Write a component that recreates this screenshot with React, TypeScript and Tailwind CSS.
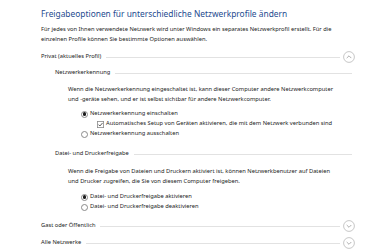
import React from "react";

function Chevron({ up }: { up?: boolean }) {
  return (
    <svg width="12" height="12" viewBox="0 0 12 12" className="shrink-0">
      <circle cx="6" cy="6" r="5.4" fill="white" stroke="#b9b9b9" strokeWidth="0.8" />
      {up ? (
        <path d="M3.7 7.1 L6 4.8 L8.3 7.1" fill="none" stroke="#9a9a9a" strokeWidth="0.8" />
      ) : (
        <path d="M3.7 5 L6 7.3 L8.3 5" fill="none" stroke="#9a9a9a" strokeWidth="0.8" />
      )}
    </svg>
  );
}

function Radio({ checked, label }: { checked?: boolean; label: string }) {
  return (
    <div className="flex items-center h-[10px] pl-[81px]">
      <span className="w-[7px] h-[7px] rounded-full border-[0.8px] border-[#8a8a8a] bg-white flex items-center justify-center shrink-0">
        {checked && <span className="w-[3.5px] h-[3.5px] rounded-full bg-[#1a1a1a]" />}
      </span>
      <span className="ml-[2px]">{label}</span>
    </div>
  );
}

function Checkbox({ label }: { label: string }) {
  return (
    <div className="flex items-center h-[10px] pl-[97px]">
      <svg width="7" height="7" viewBox="0 0 7 7" className="shrink-0">
        <rect x="0.4" y="0.4" width="6.2" height="6.2" fill="white" stroke="#8a8a8a" strokeWidth="0.8" />
        <path d="M1.5 3.6 L2.9 5 L5.6 1.9" fill="none" stroke="#333" strokeWidth="0.8" />
      </svg>
      <span className="ml-[2px]">{label}</span>
    </div>
  );
}

function GroupHeader({ label, up }: { label: string; up?: boolean }) {
  return (
    <div className="flex items-center h-[12px] pl-[41px] pr-[16px]">
      <span className="shrink-0">{label}</span>
      <div className="flex-1 h-px bg-[#e2e2e2] ml-[5px] mr-[3px]" />
      <Chevron up={up} />
    </div>
  );
}

function SubHeader({ label }: { label: string }) {
  return (
    <div className="flex items-center h-[10px] pl-[55px] pr-[19px]">
      <span className="shrink-0">{label}</span>
      <div className="flex-1 h-px bg-[#e2e2e2] ml-[5px]" />
    </div>
  );
}

export default function App() {
  return (
    <div className="w-[371px] h-[250px] bg-white overflow-hidden font-['Noto_Sans',sans-serif] text-[5.75px] leading-[9.5px] text-[#222]">
      <div className="pt-[8px] pl-[41px] text-[8.4px] leading-[12px] text-[#1e4b8f]">
        Freigabeoptionen für unterschiedliche Netzwerkprofile ändern
      </div>
      <div className="mt-[5px] pl-[41px]">
        Für jedes von Ihnen verwendete Netzwerk wird unter Windows ein separates Netzwerkprofil erstellt. Für die
        <br />
        einzelnen Profile können Sie bestimmte Optionen auswählen.
      </div>
      <div className="mt-[7px]">
        <GroupHeader label="Privat (aktuelles Profil)" up />
      </div>
      <div className="mt-[5px]">
        <SubHeader label="Netzwerkerkennung" />
      </div>
      <div className="mt-[7px] pl-[68px]">
        Wenn die Netzwerkerkennung eingeschaltet ist, kann dieser Computer andere Netzwerkcomputer
        <br />
        und -geräte sehen, und er ist selbst sichtbar für andere Netzwerkcomputer.
      </div>
      <div className="mt-[5px]">
        <Radio checked label="Netzwerkerkennung einschalten" />
        <Checkbox label="Automatisches Setup von Geräten aktivieren, die mit dem Netzwerk verbunden sind" />
        <Radio label="Netzwerkerkennung ausschalten" />
      </div>
      <div className="mt-[10px]">
        <SubHeader label="Datei- und Druckerfreigabe" />
      </div>
      <div className="mt-[8px] pl-[68px]">
        Wenn die Freigabe von Dateien und Druckern aktiviert ist, können Netzwerkbenutzer auf Dateien
        <br />
        und Drucker zugreifen, die Sie von diesem Computer freigeben.
      </div>
      <div className="mt-[6px]">
        <Radio checked label="Datei- und Druckerfreigabe aktivieren" />
        <Radio label="Datei- und Druckerfreigabe deaktivieren" />
      </div>
      <div className="mt-[8px]">
        <GroupHeader label="Gast oder Öffentlich" />
      </div>
      <div className="mt-[5px]">
        <GroupHeader label="Alle Netzwerke" />
      </div>
    </div>
  );
}
